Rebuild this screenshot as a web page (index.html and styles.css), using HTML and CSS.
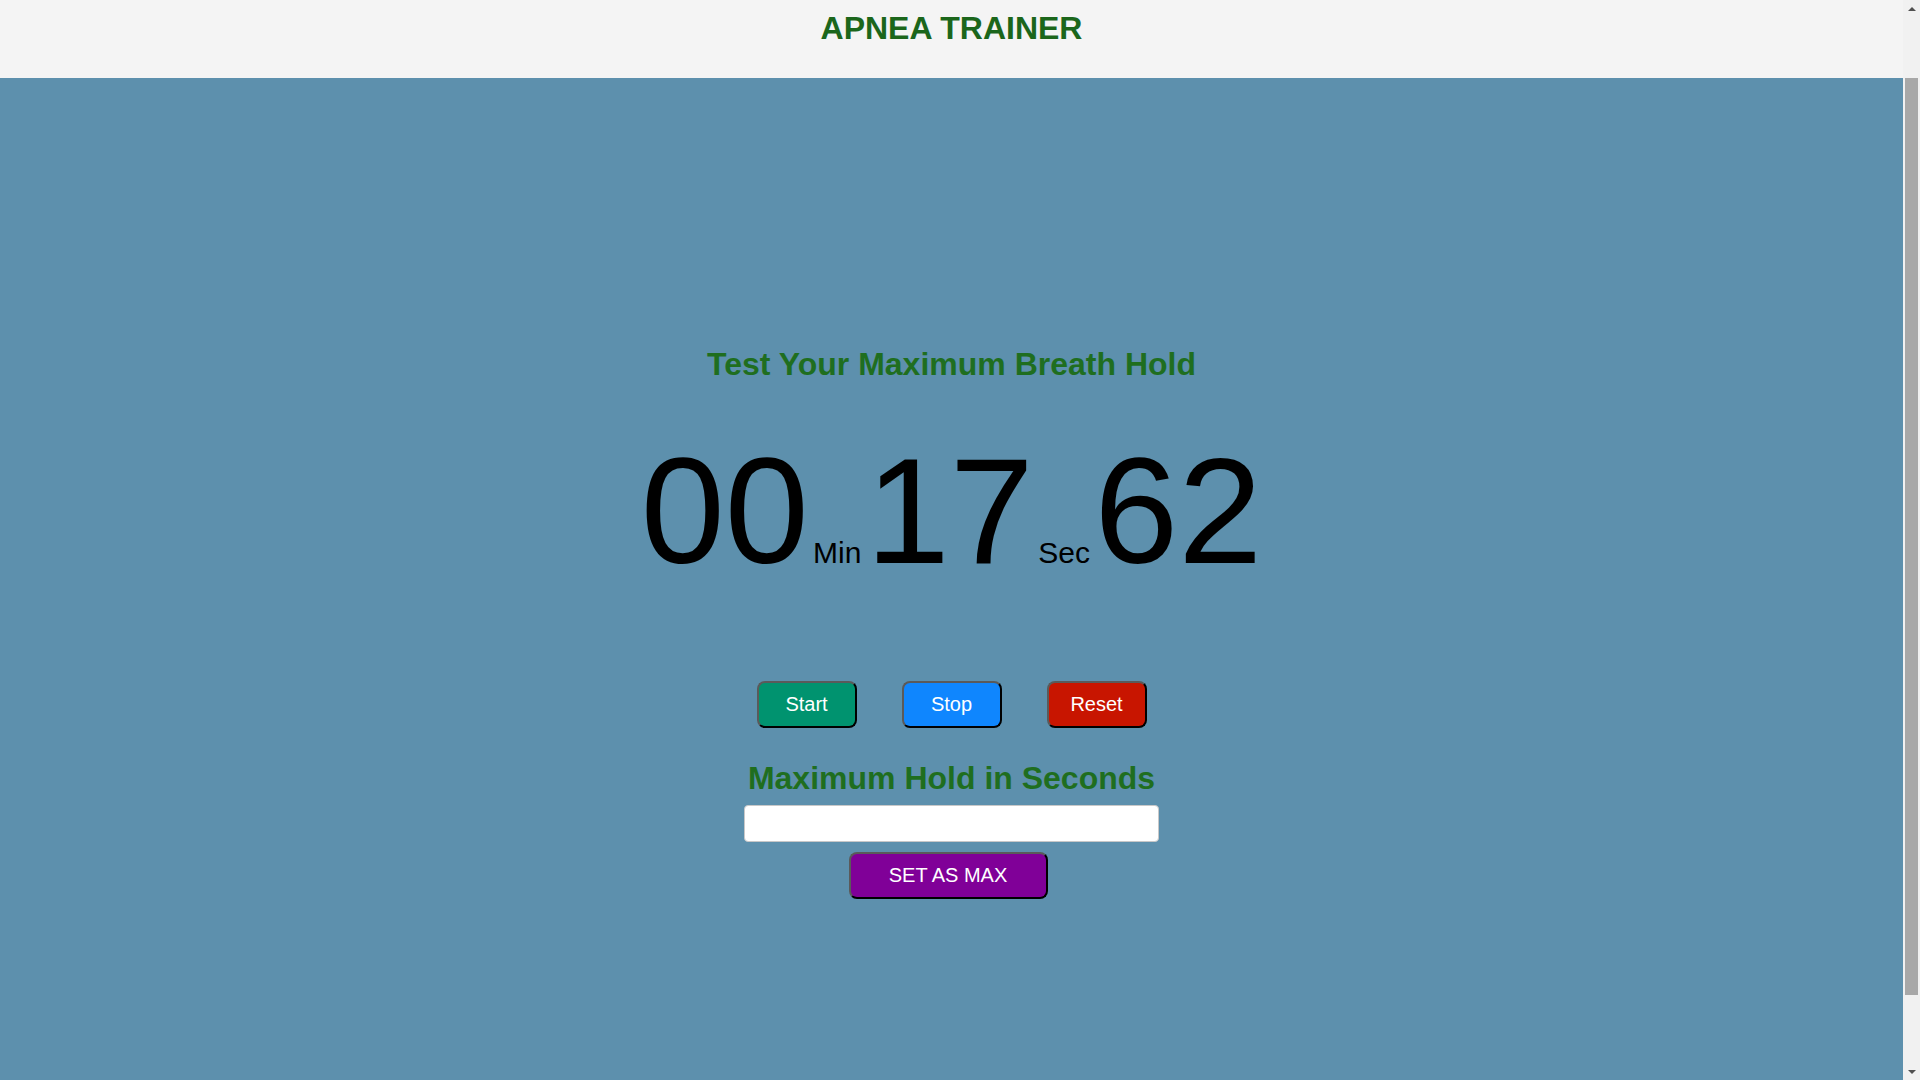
FILE: index.html
```html
<!DOCTYPE html>
<html lang="en">
<head>
<meta charset="utf-8">
<title>Apnea Trainer</title>
<link rel="stylesheet" href="styles.css">
</head>
<body>
<div class="app">
  <div class="page">
    <header class="topbar">
      <h1 class="brand">APNEA TRAINER</h1>
    </header>
    <main class="stage">
      <h2 class="heading">Test Your Maximum Breath Hold</h2>
      <div class="timer">
        <span class="num">00</span>
        <span class="unit">Min</span>
        <span class="num">17</span>
        <span class="unit">Sec</span>
        <span class="num">62</span>
      </div>
      <div class="controls">
        <button class="btn btn-start">Start</button>
        <button class="btn btn-stop">Stop</button>
        <button class="btn btn-reset">Reset</button>
      </div>
      <h2 class="heading heading-max">Maximum Hold in Seconds</h2>
      <input class="max-input" type="text">
      <button class="btn btn-set">SET AS MAX</button>
    </main>
  </div>
  <div class="scrollbar" aria-hidden="true">
    <div class="sb-arrow"><span class="tri tri-up"></span></div>
    <div class="sb-track"><div class="sb-thumb"></div></div>
    <div class="sb-arrow"><span class="tri tri-down"></span></div>
  </div>
</div>
</body>
</html>
```
FILE: styles.css
```css
html, body {
  margin: 0;
  padding: 0;
  overflow: hidden;
}
body {
  font-family: "Liberation Sans", Arial, sans-serif;
  font-size: 16px;
  background: #5d90ad;
}
.app {
  display: flex;
  height: 1080px;
}
.page {
  flex: 1;
  display: flex;
  flex-direction: column;
  min-width: 0;
}
.topbar {
  height: 78px;
  flex: none;
  background: #f4f4f4;
  box-sizing: border-box;
  padding-top: 10px;
}
.brand {
  margin: 0;
  text-align: center;
  font-size: 32px;
  line-height: 37px;
  font-weight: bold;
  color: #1b661b;
}
.stage {
  flex: 1;
  background: #5d90ad;
  box-sizing: border-box;
  padding-top: 268px;
  display: flex;
  flex-direction: column;
  align-items: center;
}
.heading {
  margin: 0;
  font-size: 32px;
  line-height: 37px;
  font-weight: bold;
  color: #1f6e1f;
  text-align: center;
}
.timer {
  margin-top: 52px;
  display: flex;
  align-items: baseline;
  justify-content: center;
  gap: 4.4px;
  color: #000;
}
.num {
  font-size: 151px;
  line-height: 1;
}
.unit {
  font-size: 30px;
  line-height: 1;
}
.controls {
  margin-top: 95px;
  display: flex;
  gap: 45px;
}
.btn {
  font-family: "Liberation Sans", Arial, sans-serif;
  font-size: 20px;
  line-height: 23px;
  color: #fff;
  padding: 10px 0;
  width: 100px;
  border-width: 2px;
  border-style: solid;
  border-color: #5a5a5a #000 #000 #5a5a5a;
  border-radius: 8px;
  cursor: pointer;
}
.btn-start { background: #00936f; }
.btn-stop { background: #0f86fe; }
.btn-reset { background: #c81500; }
.heading-max {
  margin-top: 32px;
}
.max-input {
  margin-top: 8px;
  width: 415px;
  height: 37px;
  box-sizing: border-box;
  border: 1px solid #c8c8c8;
  border-radius: 4px;
  background: #fff;
  padding: 0 8px;
  font-size: 16px;
}
.btn-set {
  margin-top: 10px;
  margin-right: 7px;
  width: 199px;
  background: #800098;
}
.scrollbar {
  width: 17px;
  flex: none;
  background: #f1f1f1;
  display: flex;
  flex-direction: column;
}
.sb-arrow {
  height: 17px;
  flex: none;
  display: flex;
  align-items: center;
  justify-content: center;
}
.tri {
  width: 0;
  height: 0;
  border-left: 4px solid transparent;
  border-right: 4px solid transparent;
}
.tri-up { border-bottom: 4px solid #505050; }
.tri-down { border-top: 4px solid #505050; }
.sb-track {
  flex: 1;
  padding: 61px 2px 0 2px;
}
.sb-thumb {
  height: 917px;
  background: #a8a8a8;
}
```
